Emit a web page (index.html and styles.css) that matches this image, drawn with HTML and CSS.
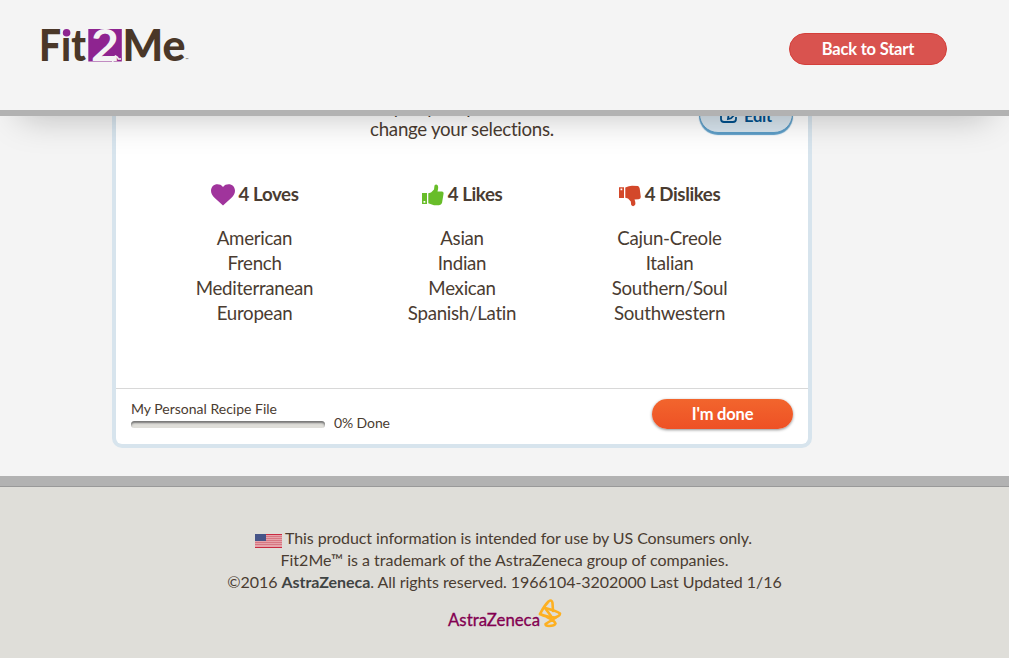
FILE: index.html
```html
<!DOCTYPE html>
<html lang="en">
<head>
<meta charset="utf-8">
<title>Fit2Me</title>
<link rel="stylesheet" href="styles.css">
</head>
<body>
<header class="header">
  <svg class="logo" width="150" height="40" viewBox="0 0 150 40" role="img" aria-label="Fit2Me">
    <rect x="47.300" y="4" width="33.500" height="32.500" fill="#8e2490"/>
    <g class="logo-text">
      <text x="-2" y="36" textLength="47" lengthAdjust="spacingAndGlyphs">Fit</text>
      <text class="logo-two" x="50" y="36" textLength="28" lengthAdjust="spacingAndGlyphs">2</text>
      <text x="81.500" y="36" textLength="63" lengthAdjust="spacingAndGlyphs">Me</text>
    </g>
    <path d="M71 36.500Q74 36 74.500 31Q77 32 77.500 34L80 34" fill="none" stroke="#f4f4f4" stroke-width="1.500"/>
    <rect x="20" y="2" width="10" height="10.500" fill="#f4f4f4"/>
    <circle cx="25.600" cy="7.800" r="3.800" fill="#8e2490"/>
    <text class="logo-tm" x="144.500" y="36">™</text>
  </svg>
  <button class="btn btn-back">Back to Start</button>
</header>
<main class="main">
  <section class="card">
    <div class="intro">
      <p>Use Edit below if any of your preferences or choices need<br>change your selections.</p>
      <button class="btn btn-edit">
        <svg width="18" height="16" viewBox="0 0 18 16" fill="none" stroke="#00508c" stroke-width="1.8"><path d="M9 2H4Q1 2 1 5V11Q1 14 4 14H13Q16 14 16 11V9"/><path d="M8 11L8.500 7.500L15 1.500L17.300 4L11 10.300Z"/></svg>
        Edit
      </button>
    </div>
    <div class="columns">
      <div class="col">
        <h2><svg width="24" height="22" viewBox="0 0 24 22"><path fill="#a0349c" d="M12 3C13.500 1 15.500.3 17.500.3C21.300.3 24 3 24 6.800C24 9.500 22.500 11.800 20.500 13.800L12 21.500L3.500 13.800C1.500 11.800 0 9.500 0 6.800C0 3 2.700.3 6.500.3C8.500.3 10.500 1 12 3Z"/></svg><span>4 Loves</span></h2>
        <ul><li>American</li><li>French</li><li>Mediterranean</li><li>European</li></ul>
      </div>
      <div class="col">
        <h2><svg width="22" height="22" viewBox="0 0 22 22"><path fill="#68bd29" fill-rule="evenodd" d="M0 9H5V20H0ZM1.500 17V18.800H3.300V17ZM6.300 9.200L9 8.500L12 5.500L12.500 1.500Q14-.5 15.800 1.500Q16.700 3.500 15.500 7.500L20 7.600Q22 8 21.500 10L20 19Q19.300 21 17 21.300H12Q9 20.500 6.300 19.300Z"/></svg><span>4 Likes</span></h2>
        <ul><li>Asian</li><li>Indian</li><li>Mexican</li><li>Spanish/Latin</li></ul>
      </div>
      <div class="col">
        <h2><svg class="thumb-down" width="22" height="22" viewBox="0 0 22 22"><path fill="#d3482a" fill-rule="evenodd" d="M0 2.300H5V13H0ZM1.500 3.500V5.300H3.300V3.500ZM6.300 2.500Q10 1 13 .7L19 1Q20.300 1.500 20.700 3.500L21.800 12Q21.800 13.800 19.700 14.200L15.500 14.500Q17 18 16 20Q14 22.300 12.200 20L11.800 16.500L9 13.500L6.300 12.700Z"/></svg><span>4 Dislikes</span></h2>
        <ul><li>Cajun-Creole</li><li>Italian</li><li>Southern/Soul</li><li>Southwestern</li></ul>
      </div>
    </div>
    <div class="card-footer">
      <div class="progress">
        <span class="progress-label">My Personal Recipe File</span>
        <div class="progress-row"><span class="track"></span><span>0% Done</span></div>
      </div>
      <button class="btn btn-done">I'm done</button>
    </div>
  </section>
</main>
<footer class="footer">
  <p class="line-flag"><svg class="flag" width="27" height="14" viewBox="0 0 27 14"><rect width="27" height="14" fill="#e6a3aa"/><path d="M0 .5H27M0 13.500H27" stroke="#c92b42"/><path d="M0 2.500H27M0 4.500H27M0 6.500H27M0 8.500H27M0 10.500H27" stroke="#d77782"/><rect width="11" height="7" fill="#465488"/></svg>This product information is intended for use by US Consumers only.</p>
  <p class="line-tm">Fit2Me™ is a trademark of the AstraZeneca group of companies.</p>
  <p class="line-copy">©2016 <b>AstraZeneca</b>. All rights reserved. 1966104-3202000 Last Updated 1/16</p>
  <svg class="az" width="114" height="30" viewBox="0 0 114 30" role="img" aria-label="AstraZeneca">
    <text class="az-text" x="0" y="27" textLength="92" lengthAdjust="spacingAndGlyphs">AstraZeneca</text>
    <g fill="none" stroke="#fdb022" stroke-width="2.600" stroke-linejoin="round" stroke-linecap="round"><path d="M92 15Q96 7 100.500 2.500Q104 0 104.500 4L105 12"/><path d="M92 15Q98 18 107 18.500Q112 17 112 14.500Q109 12 97 9"/><path d="M97 9L103 17"/><path d="M108 18.500L97.500 25Q97.500 27 101 27Q106.500 27 107.500 24.500Q106 21 99 18"/></g>
  </svg>
</footer>
</body>
</html>
```
FILE: styles.css
```css
* { box-sizing: border-box; }
html, body { height: 100%; }
body {
  margin: 0;
  display: flex;
  flex-direction: column;
  overflow: hidden;
  background: #f4f4f4;
  color: #4a3c31;
  font-family: Lato, "Liberation Sans", sans-serif;
  font-size: 18.700px;
  letter-spacing: -.28px;
  font-variant-ligatures: none;
}
p, h2, ul { margin: 0; padding: 0; }
ul { list-style: none; }
.header {
  position: relative;
  z-index: 2;
  flex: none;
  display: flex;
  justify-content: space-between;
  align-items: flex-start;
  height: 116px;
  padding: 25px 62px 0 41px;
  border-bottom: 6px solid #b2b2b2;
  background: #f4f4f4;
  box-shadow: 0 20px 36px -20px rgba(0, 0, 0, .26);
}
.logo { overflow: visible; letter-spacing: 0; }
.logo-text {
  font-family: Lato, sans-serif;
  font-size: 44px;
  font-weight: 900;
  fill: #4a3728;
}
.logo-two { fill: #f4f4f4; font-weight: 700; }
.logo-tm { font-size: 4px; fill: #4a3728; }
.btn {
  border: 0;
  padding: 0;
  border-radius: 17px;
  color: #fff;
  font-family: inherit;
  font-size: 16.500px;
  letter-spacing: -.2px;
  font-weight: 700;
}
.btn-back {
  width: 158px;
  height: 32px;
  margin-top: 8px;
  border: 1px solid #d43f3a;
  background: #d9534f;
}
.main { flex: none; height: 360px; padding-left: 112px; }
.card {
  display: flex;
  flex-direction: column;
  width: 700px;
  height: 332px;
  border: 4px solid #d7e4ed;
  border-top: 0;
  border-radius: 0 0 10px 10px;
  background: #fff;
}
.intro {
  position: relative;
  height: 66px;
  margin-top: -24px;
  text-align: center;
  line-height: 22px;
}
.intro p { padding-top: 3.500px; }
.btn-edit {
  position: absolute;
  right: 15px;
  top: 3px;
  display: flex;
  justify-content: center;
  align-items: center;
  gap: 6px;
  width: 94px;
  height: 38px;
  padding-top: 3px;
  border: 1px solid #5c9dc7;
  border-radius: 19px;
  background: #d7e4ed;
  box-shadow: 0 2px 1px #5c9dc7;
  color: #00508c;
}
.columns {
  display: grid;
  grid-template-columns: repeat(3, 207.500px);
  justify-content: center;
  text-align: center;
  padding-top: 24px;
}
.col h2 {
  display: flex;
  justify-content: center;
  align-items: center;
  gap: 4px;
  height: 25px;
  font-size: 18.700px;
  letter-spacing: -.4px;
  font-weight: 700;
}
.col h2 span { padding-bottom: 2px; }
.thumb-down { margin-top: 2px; }
.col ul { margin-top: 19px; line-height: 25px; }
.card-footer {
  display: flex;
  justify-content: space-between;
  height: 56px;
  margin-top: auto;
  padding: 10px 15px 0;
  border-top: 1px solid #d8d8d8;
}
.progress { font-size: 14px; line-height: 14px; padding-top: 3px; letter-spacing: 0; }
.progress-row { display: flex; gap: 9px; letter-spacing: -.1px; }
.track {
  width: 194px;
  height: 7px;
  margin-top: 5px;
  border-radius: 4px;
  background: #dfded9;
  box-shadow: inset 0 2px 2px #777;
}
.btn-done {
  width: 141px;
  height: 30px;
  background: linear-gradient(#f2652d, #ee5125);
  box-shadow: 0 1px 3px rgba(0, 0, 0, .45);
}
.footer {
  flex: 1;
  display: flex;
  flex-direction: column;
  align-items: center;
  padding-top: 41px;
  border-top: 10px solid #b2b2b2;
  background: #dfded9;
  box-shadow: inset 0 1px #999;
  font-size: 16px;
  letter-spacing: 0;
  line-height: 22px;
}
.footer p { white-space: nowrap; }
.footer b { color: #3f4444; }
.footer .line-flag { display: flex; align-items: center; gap: 3px; letter-spacing: -.08px; padding-right: 2px; }
.footer .line-copy { letter-spacing: -.05px; }
.flag { margin-top: 5px; }
.az { margin-top: 6px; overflow: visible; }
.az-text { font-size: 17px; fill: #830051; stroke: #830051; stroke-width: .3px; }
```
